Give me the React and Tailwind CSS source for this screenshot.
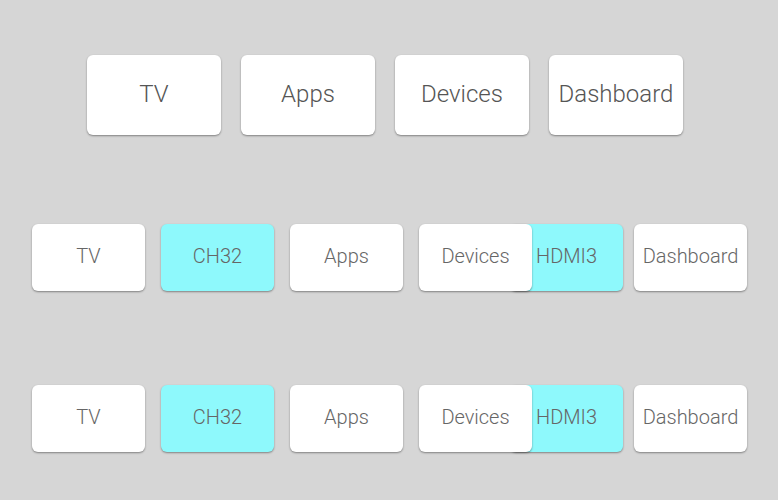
import React from 'react';

const card = 'flex items-center justify-center rounded-[6px] shadow-[0_1px_2px_rgba(0,0,0,0.4)]';

function SmallRow({ className }) {
  const small = `${card} w-[113px] h-[67px] pb-[3px] text-[20px] text-[#666]`;
  return (
    <div className={`flex ${className}`}>
      <div className={`${small} bg-white ml-[32px]`}>TV</div>
      <div className={`${small} bg-[#8ef9fc] ml-[16px]`}>CH32</div>
      <div className={`${small} bg-white ml-[16px]`}>Apps</div>
      <div className={`${small} bg-white ml-[16px] relative z-10`}>Devices</div>
      <div className={`${small} bg-[#8ef9fc] ml-[-22px]`}>HDMI3</div>
      <div className={`${small} bg-white ml-[11px] w-[112px]`}>Dashboard</div>
    </div>
  );
}

export default function App() {
  const big = `${card} w-[134px] h-[80px] pb-[2px] bg-white text-[24px] text-[#555]`;
  return (
    <div className="w-[778px] h-[500px] bg-[#d6d6d6] font-['Roboto',sans-serif] font-light">
      <div className="flex gap-[20px] pl-[87px] pt-[55px]">
        <div className={big}>TV</div>
        <div className={big}>Apps</div>
        <div className={big}>Devices</div>
        <div className={big}>Dashboard</div>
      </div>
      <SmallRow className="mt-[89px]" />
      <SmallRow className="mt-[94px]" />
    </div>
  );
}
